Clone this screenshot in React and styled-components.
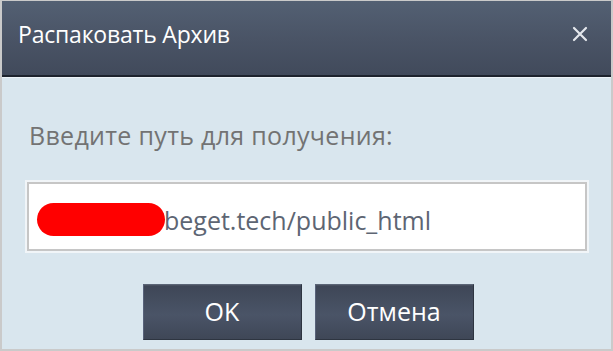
import React from 'react';
import styled, {createGlobalStyle} from 'styled-components';

const Global = createGlobalStyle`
  html, body {
    margin: 0;
    padding: 0;
    background: #fff;
  }
  * { box-sizing: border-box; }
`;

const Dialog = styled.div`
  width: 613px;
  height: 351px;
  border: 2px solid #cacaca;
  border-top-width: 1px;
  display: flex;
  flex-direction: column;
  font-family: "Open Sans", "Noto Sans", sans-serif;
`;

const TitleBar = styled.div`
  height: 76px;
  flex: none;
  display: flex;
  align-items: center;
  justify-content: space-between;
  padding: 0 23px 0 16px;
  background: linear-gradient(to bottom, #536073 0%, #4a5466 50%, #414a5b 100%);
  border-bottom: 2px solid #1d232d;
`;

const Title = styled.div`
  color: #ffffff;
  font-size: 23px;
  letter-spacing: -0.2px;
  padding-bottom: 8px;
`;

const Close = styled.button`
  border: 0;
  background: none;
  padding: 0;
  width: 16px;
  height: 16px;
  cursor: pointer;
  display: flex;
  margin-bottom: 8px;
`;

const Body = styled.div`
  flex: 1;
  background: #d9e6ee;
  border-top: 1px solid #edf3f7;
  padding: 40px 22px 0 23px;
  display: flex;
  flex-direction: column;
`;

const Label = styled.div`
  color: #737373;
  font-size: 25px;
  line-height: 34px;
  padding-left: 4px;
  letter-spacing: 0.3px;
`;

const Field = styled.div`
  margin-top: 28px;
  height: 73px;
  border: 2px solid #f1f5f8;
  background: #fff;
  display: flex;
`;

const FieldInner = styled.div`
  flex: 1;
  border: 2px solid #c6c6c6;
  display: flex;
  align-items: center;
  padding: 7px 0 0 8px;
  color: #5d6573;
  font-size: 25px;
`;

const Blot = styled.span`
  width: 128px;
  height: 33px;
  border-radius: 17px;
  background: #ff0000;
  margin-right: -1px;
  margin-top: -2px;
  flex: none;
`;

const Buttons = styled.div`
  margin-top: 31px;
  display: flex;
  justify-content: center;
  gap: 13px;
  padding-left: 2px;
`;

const Button = styled.button`
  width: 159px;
  height: 56px;
  border: 1px solid #2e3541;
  border-top-color: #5b6576;
  border-left-color: #58627a;
  background: linear-gradient(to bottom, #3e4656 0%, #4a5467 55%, #3f4757 100%);
  color: #fff;
  font-family: "Open Sans", "Noto Sans", sans-serif;
  font-size: 25px;
  padding: 0 0 2px;
  cursor: pointer;
  box-shadow: inset 0 1px 0 rgba(255,255,255,0.06);
`;

export default function App() {
  return (
    <>
      <Global />
      <Dialog>
        <TitleBar>
          <Title>Распаковать Архив</Title>
          <Close aria-label="close">
            <svg width="16" height="16" viewBox="0 0 16 16">
              <path d="M2 2 L14 14 M14 2 L2 14" stroke="#e4e7ec" strokeWidth="2.2" strokeLinecap="round" />
            </svg>
          </Close>
        </TitleBar>
        <Body>
          <Label>Введите путь для получения:</Label>
          <Field>
            <FieldInner>
              <Blot />
              beget.tech/public_html
            </FieldInner>
          </Field>
          <Buttons>
            <Button>OK</Button>
            <Button>Отмена</Button>
          </Buttons>
        </Body>
      </Dialog>
    </>
  );
}
